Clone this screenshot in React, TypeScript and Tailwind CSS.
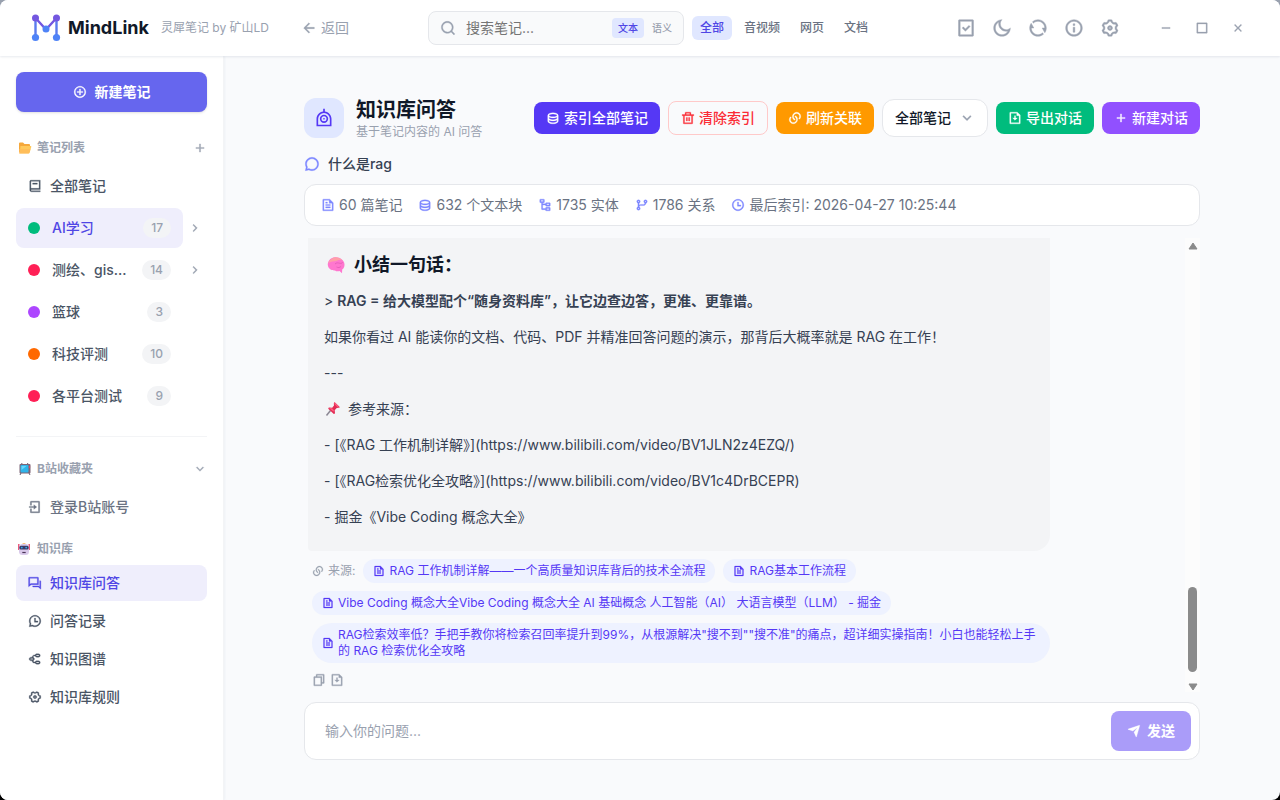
import { useState } from 'react';
import {
	RiAddCircleLine,
	RiAddLine,
	RiArrowDownSLine,
	RiArrowLeftLine,
	RiArrowRightSLine,
	RiBook2Line,
	RiChat3Line,
	RiChatHistoryLine,
	RiCheckboxBlankLine,
	RiCloseLine,
	RiDatabase2Line,
	RiDeleteBinLine,
	RiFileCopyLine,
	RiFileDownloadLine,
	RiFileTextLine,
	RiGitBranchLine,
	RiInformationLine,
	RiLinksLine,
	RiLoginBoxLine,
	RiMindMap,
	RiMoonLine,
	RiNodeTree,
	RiQuestionAnswerLine,
	RiRefreshLine,
	RiSearchLine,
	RiSendPlaneFill,
	RiSettings3Line,
	RiSettings4Line,
	RiSubtractLine,
	RiTaskLine,
	RiTimeLine,
} from 'react-icons/ri';

const folders = [
	{ name: 'AI学习', count: 17, color: 'bg-emerald-500', children: true },
	{ name: '测绘、gis...', count: 14, color: 'bg-rose-500', children: true },
	{ name: '篮球', count: 3, color: 'bg-purple-500', children: false },
	{ name: '科技评测', count: 10, color: 'bg-orange-500', children: false },
	{ name: '各平台测试', count: 9, color: 'bg-rose-500', children: false },
];

const knowledgeNav = [
	{ label: '知识库问答', icon: RiQuestionAnswerLine },
	{ label: '问答记录', icon: RiChatHistoryLine },
	{ label: '知识图谱', icon: RiMindMap },
	{ label: '知识库规则', icon: RiSettings4Line },
];

const stats = [
	{ text: '60 篇笔记', icon: RiFileTextLine },
	{ text: '632 个文本块', icon: RiDatabase2Line },
	{ text: '1735 实体', icon: RiNodeTree },
	{ text: '1786 关系', icon: RiGitBranchLine },
	{ text: '最后索引: 2026-04-27 10:25:44', icon: RiTimeLine },
];

const headerActions = [
	{ label: '任务', icon: RiTaskLine },
	{ label: '深色模式', icon: RiMoonLine },
	{ label: '刷新', icon: RiRefreshLine },
	{ label: '关于', icon: RiInformationLine },
	{ label: '设置', icon: RiSettings3Line },
];

const windowActions = [
	{ label: '最小化', icon: RiSubtractLine },
	{ label: '最大化', icon: RiCheckboxBlankLine },
	{ label: '关闭', icon: RiCloseLine },
];

const sources = [
	'RAG 工作机制详解——一个高质量知识库背后的技术全流程',
	'RAG基本工作流程',
	'Vibe Coding 概念大全Vibe Coding 概念大全 AI 基础概念 人工智能（AI） 大语言模型（LLM） - 掘金',
	'RAG检索效率低？手把手教你将检索召回率提升到99%，从根源解决"搜不到""搜不准"的痛点，超详细实操指南！小白也能轻松上手的 RAG 检索优化全攻略',
];

const Logo = () => (
	<svg viewBox="0 0 30 28" className="w-[30px] h-7 shrink-0">
		<g fill="none" strokeWidth="2.4">
			<path d="M4.5 4v20M25.5 4v20" stroke="#5b7bee" />
			<path d="M4.5 4 15 15.500 25.500 4" stroke="#7357e0" />
		</g>
		<circle cx="4.500" cy="4" r="3.500" fill="#7357e0" />
		<circle cx="25.500" cy="4" r="3.500" fill="#7357e0" />
		<circle cx="15" cy="15" r="3.500" fill="#4f83f7" />
		<circle cx="4.500" cy="23.500" r="3.600" fill="#4f83f7" />
		<circle cx="25.500" cy="23.500" r="3.600" fill="#4f83f7" />
	</svg>
);

const RobotIcon = () => (
	<svg viewBox="0 0 24 24" fill="currentColor" className="size-5">
		<path d="M13 4.055c4.500.497 8 4.312 8 8.945v9H3v-9c0-4.633 3.500-8.448 8-8.945V1h2v3.055zM19 20v-7a7 7 0 1 0-14 0v7h14zm-7-2a5 5 0 1 1 0-10 5 5 0 0 1 0 10zm0-2a3 3 0 1 0 0-6 3 3 0 0 0 0 6zm0-2a1 1 0 1 1 0-2 1 1 0 0 1 0 2z" />
	</svg>
);

const FolderEmoji = () => (
	<svg viewBox="0 0 16 16" className="size-4 shrink-0">
		<path d="M2 3.500q0-1 1-1h3l1.500 1.500H12q1 0 1 1V12H2z" fill="#f5a83c" />
		<path d="M3.500 6h10.200q.8 0 .6.8l-1.600 5.700q-.3 1-1.200 1H2.500z" fill="#ffc95c" />
		<path d="M2 9v4.500h9.500q.8 0 1-1l1-3.500z" fill="#ffb95a" opacity=".7" />
	</svg>
);

const TvEmoji = () => (
	<svg viewBox="0 0 16 16" className="size-4 shrink-0">
		<path d="M5.500 3.500 4.500 2M10 3.500 11 2M4 12l-1 2M12 12l1 2" stroke="#6b5d70" strokeWidth="1" />
		<rect x="2.500" y="3" width="11" height="9.500" rx="1" fill="#7d6577" />
		<rect x="3.500" y="4" width="8" height="7.500" rx="1" fill="#2fb4ea" />
		<path d="M4.500 5h5l-5 4z" fill="#67d6fb" />
		<path d="M12.500 5v2" stroke="#e0475f" strokeWidth="1.200" />
	</svg>
);

const RobotEmoji = () => (
	<svg viewBox="0 0 16 16" className="size-4 shrink-0">
		<path d="M1.800 3v6M12.200 3v6" stroke="#e8486f" strokeWidth="1.400" />
		<path d="M4.500 3.500Q7 1 9.500 3.500z" fill="#f6a13a" />
		<rect x="2" y="3" width="10" height="11" rx="3.500" fill="#d9c9ea" />
		<rect x="2.300" y="4.800" width="9.400" height="3.700" rx="1.500" fill="#3b3a66" />
		<circle cx="4.800" cy="6.600" r=".9" fill="#35a8f0" />
		<circle cx="9.200" cy="6.600" r=".9" fill="#35a8f0" />
		<path d="M5.300 11.500h3.400" stroke="#4b3558" strokeWidth="1.200" />
	</svg>
);

const BrainEmoji = () => (
	<svg viewBox="0 0 20 20" className="size-5 shrink-0">
		<path
			d="M2 11C1 7 4 2.500 9 2.200c5-.4 9.500 3 9.500 7.300 0 2.500-.8 4-2.300 5l-.2 3.700-2.500-2.200c-2 .6-3.500.2-4.500-.6C6 15.800 2.600 14 2 11z"
			fill="#ff77cf"
		/>
		<path d="M2 8.500C3.500 4.500 6.500 2.300 9.500 2.200c3 0 5.500 1.300 7 3.300-3-1-4.500 0-6.500.5-2.500.6-5 0-8 2.500z" fill="#ff9fa8" />
		<path
			d="M9 9c1.500-1.500 3-1.200 4.500-.8s2.500.3 3-.9M10.500 12c1.500 1 3.500.6 4.500-.6"
			fill="none"
			stroke="#e85fbc"
			strokeWidth="1"
		/>
	</svg>
);

const PinEmoji = () => (
	<svg viewBox="0 0 16 16" className="size-4 shrink-0">
		<path d="M6.500 9.500 2.500 14.500" stroke="#8b8794" strokeWidth="1.500" />
		<path
			d="M10.500 1 16 6.200l-1.500.6-1.800.3-2 2.200.3 3.200-1.200.6L4.200 7.800l.6-1.200 3.400.2L10 4.500l-.2-2z"
			fill="#e22b54"
		/>
		<path d="m10.800 1.500 4 4-1.500.5-3-3zM5 7l3 .2 2 2-.5 1.500z" fill="#ff5c7d" />
	</svg>
);

const Header = () => {
	const [filter, setFilter] = useState('全部');

	return (
		<header className="relative z-10 flex h-14 shrink-0 items-center bg-white pl-[31px] pr-6 shadow-[0_1px_2px_rgba(148,163,184,0.22)]">
			<Logo />
			<span className="ml-[7px] text-lg font-bold text-gray-900">MindLink</span>
			<span className="ml-3 text-xs text-gray-400">灵犀笔记 by 矿山LD</span>
			<button className="ml-8 flex items-center gap-1 text-sm text-gray-400">
				<RiArrowLeftLine className="size-4" />
				返回
			</button>
			<div className="ml-auto flex h-[34px] w-64 items-center rounded-lg border border-gray-200 bg-gray-50 pl-[11px] pr-[5px]">
				<RiSearchLine className="size-4 shrink-0 text-gray-400" />
				<input
					type="text"
					aria-label="搜索笔记"
					placeholder="搜索笔记..."
					className="ml-2.5 min-w-0 flex-1 bg-transparent text-sm outline-none placeholder:text-[#757575]"
				/>
				<button className="h-5 rounded bg-indigo-100 px-1.5 text-[10px] font-medium text-[#4f46e5]">
					文本
				</button>
				<button className="ml-0.5 h-5 rounded px-1.5 text-[10px] font-medium text-gray-400">
					语义
				</button>
			</div>
			<div className="ml-2 flex gap-1">
				{['全部', '音视频', '网页', '文档'].map((item) => (
					<button
						key={item}
						onClick={() => setFilter(item)}
						className={`h-6 rounded-md px-2 text-xs font-medium ${
							filter === item ? 'bg-indigo-100 text-[#4f46e5]' : 'text-gray-500'
						}`}
					>
						{item}
					</button>
				))}
			</div>
			<div className="ml-[72px] flex">
				{headerActions.map(({ label, icon: Icon }) => (
					<button
						key={label}
						aria-label={label}
						className="flex size-9 items-center justify-center text-gray-400"
					>
						<Icon className="size-5" />
					</button>
				))}
			</div>
			<div className="ml-5 flex">
				{windowActions.map(({ label, icon: Icon }) => (
					<button
						key={label}
						aria-label={label}
						className="flex size-9 items-center justify-center text-gray-400"
					>
						<Icon className="size-[14px]" />
					</button>
				))}
			</div>
		</header>
	);
};

const Sidebar = () => {
	const [active, setActive] = useState('知识库问答');

	return (
		<aside className="flex w-56 shrink-0 flex-col border-r border-gray-100 bg-white p-4 shadow-[1px_0_2px_rgba(148,163,184,0.1)]">
			<button className="flex h-10 items-center justify-center gap-2 rounded-lg bg-[#6666ee] text-sm font-semibold text-white shadow-sm">
				<RiAddCircleLine className="size-[14px]" />
				新建笔记
			</button>

			<div className="mt-6 flex h-6 items-center gap-1 pl-px text-xs font-bold text-gray-400">
				<FolderEmoji />
				<h2 className="flex-1">笔记列表</h2>
				<button aria-label="新建文件夹">
					<RiAddLine className="size-[14px]" />
				</button>
			</div>
			<button className="mt-2 flex h-9 items-center gap-2 px-3 text-sm font-medium text-gray-600">
				<RiBook2Line className="size-[14px]" />
				全部笔记
			</button>
			<ul className="mt-1 flex flex-col gap-0.5">
				{folders.map((folder, index) => (
					<li key={folder.name} className="flex items-center">
						<button
							className={`flex h-10 min-w-0 flex-1 items-center gap-3 rounded-lg px-3 text-sm font-medium ${
								index === 0 ? 'bg-[#efeefc] text-[#4f46e5]' : 'text-gray-600'
							}`}
						>
							<span className={`size-3 shrink-0 rounded-full ${folder.color}`} />
							<span className="flex-1 truncate text-left">{folder.name}</span>
							<span className="rounded-full bg-gray-100 px-2 text-xs leading-5 text-gray-400">
								{folder.count}
							</span>
						</button>
						<div className="flex w-6 justify-center text-gray-400">
							{folder.children ? (
								<button aria-label={`展开 ${folder.name}`}>
									<RiArrowRightSLine className="size-[14px]" />
								</button>
							) : null}
						</div>
					</li>
				))}
			</ul>

			<hr className="mt-5 border-gray-100" />

			<div className="mt-5 flex h-6 items-center gap-1 pl-px text-xs font-bold text-gray-400">
				<TvEmoji />
				<h2 className="flex-1">B站收藏夹</h2>
				<button aria-label="展开收藏夹">
					<RiArrowDownSLine className="size-[14px]" />
				</button>
			</div>
			<button className="mt-2 flex h-9 items-center gap-2 px-3 text-sm font-medium text-gray-500">
				<RiLoginBoxLine className="size-[14px]" />
				登录B站账号
			</button>

			<div className="mt-3 flex h-6 items-center gap-1 pl-px text-xs font-bold text-gray-400">
				<RobotEmoji />
				<h2>知识库</h2>
			</div>
			<nav className="mt-1 flex flex-col gap-0.5">
				{knowledgeNav.map(({ label, icon: Icon }) => (
					<button
						key={label}
						onClick={() => setActive(label)}
						className={`flex h-9 items-center gap-2 rounded-lg px-3 text-sm font-medium ${
							active === label ? 'bg-[#efeefc] text-[#4f46e5]' : 'text-gray-600'
						}`}
					>
						<Icon className="size-[14px]" />
						{label}
					</button>
				))}
			</nav>
		</aside>
	);
};

const Toolbar = () => (
	<div className="flex items-center gap-2">
		<button className="flex h-8 items-center gap-1 rounded-lg bg-[#5538f5] px-3 text-sm font-medium text-white">
			<RiDatabase2Line className="size-[14px]" />
			索引全部笔记
		</button>
		<button className="flex h-[34px] items-center gap-1 rounded-lg border border-red-200 px-3 text-sm font-medium text-red-500">
			<RiDeleteBinLine className="size-[14px]" />
			清除索引
		</button>
		<button className="flex h-8 items-center gap-1 rounded-lg bg-[#ff9900] px-3 text-sm font-medium text-white">
			<RiLinksLine className="size-[14px]" />
			刷新关联
		</button>
		<div className="relative">
			<select
				aria-label="笔记范围"
				className="h-[38px] w-[106px] appearance-none rounded-xl border border-gray-200 bg-white pl-3 text-sm font-medium text-gray-900"
			>
				<option>全部笔记</option>
			</select>
			<RiArrowDownSLine className="pointer-events-none absolute right-[13px] top-[11px] size-4 text-gray-400" />
		</div>
		<button className="flex h-8 items-center gap-1 rounded-lg bg-[#00bc7d] px-3 text-sm font-medium text-white">
			<RiFileDownloadLine className="size-[14px]" />
			导出对话
		</button>
		<button className="flex h-8 items-center gap-1 rounded-lg bg-[#9150ff] px-3 text-sm font-medium text-white">
			<RiAddLine className="size-[14px]" />
			新建对话
		</button>
	</div>
);

const Answer = () => (
	<div className="min-w-0 flex-1 pl-1">
		<div className="w-[742px] max-w-full">
			<div className="rounded-bl rounded-br-2xl bg-gray-100 px-4 pb-6 pt-[13px] text-sm text-gray-700">
				<h3 className="mb-3 flex items-center gap-2 pl-0.5 text-lg leading-7 font-bold text-gray-900">
					<BrainEmoji />
					小结一句话：
				</h3>
				<div className="flex flex-col gap-4">
					<p>
						&gt; <strong className="font-semibold">RAG = 给大模型配个“随身资料库”，让它边查边答，更准、更靠谱。</strong>
					</p>
					<p>如果你看过 AI 能读你的文档、代码、PDF 并精准回答问题的演示，那背后大概率就是 RAG 在工作！</p>
					<p>---</p>
					<p className="flex items-center gap-2">
						<PinEmoji />
						参考来源：
					</p>
					<p>- [《RAG 工作机制详解》](https://www.bilibili.com/video/BV1JLN2z4EZQ/)</p>
					<p>- [《RAG检索优化全攻略》](https://www.bilibili.com/video/BV1c4DrBCEPR)</p>
					<p>- 掘金《Vibe Coding 概念大全》</p>
				</div>
			</div>
			<div className="mt-2 flex flex-wrap items-center gap-2 pl-1 text-xs">
				<span className="flex items-center gap-1 text-gray-400">
					<RiLinksLine className="size-3" />
					来源:
				</span>
				{sources.map((source) => (
					<button
						key={source}
						className="flex items-center gap-1 rounded-[20px] bg-indigo-50 px-2.5 py-1 text-left text-[#5538f5]"
					>
						<RiFileTextLine className="size-3 shrink-0" />
						<span>{source}</span>
					</button>
				))}
			</div>
			<div className="mt-2 flex h-[18px] items-center gap-1 pl-1 text-gray-400">
				<button aria-label="复制">
					<RiFileCopyLine className="size-[14px]" />
				</button>
				<button aria-label="下载">
					<RiFileDownloadLine className="size-[14px]" />
				</button>
			</div>
		</div>
	</div>
);

const Scrollbar = () => (
	<div className="flex w-[15px] shrink-0 flex-col items-center bg-[#fcfcfc] pb-px pt-1">
		<svg viewBox="0 0 10 8" className="h-2 w-[10px]">
			<path d="M5 1 9 7H1z" fill="#8b8b8b" stroke="#8b8b8b" strokeWidth="1" strokeLinejoin="round" />
		</svg>
		<div className="flex-1" />
		<div className="mb-[11px] h-[85px] w-[9px] rounded-full bg-[#8b8b8b]" />
		<svg viewBox="0 0 10 8" className="h-2 w-[10px]">
			<path d="M5 7 9 1H1z" fill="#8b8b8b" stroke="#8b8b8b" strokeWidth="1" strokeLinejoin="round" />
		</svg>
	</div>
);

const App = () => {
	const [question, setQuestion] = useState('');

	return (
		<div className="bg-gradient-to-b from-gray-400 to-black">
			<div className="flex h-screen flex-col overflow-hidden rounded-lg bg-[#f9fafc] font-['Inter','Noto_Sans_CJK_SC',sans-serif] [&_svg]:stroke-[0.5]">
				<Header />
				<div className="flex min-h-0 flex-1">
					<Sidebar />
					<main className="flex min-w-0 flex-1 flex-col py-10">
						<div className="mx-auto flex min-h-0 w-full max-w-4xl flex-1 flex-col">
							<div className="flex items-center justify-between">
								<div className="flex items-center gap-3">
									<div className="flex size-10 items-center justify-center rounded-xl bg-indigo-100 text-[#5538f5]">
										<RobotIcon />
									</div>
									<div>
										<h1 className="text-xl leading-7 font-bold text-gray-900">知识库问答</h1>
										<p className="text-xs text-gray-400">基于笔记内容的 AI 问答</p>
									</div>
								</div>
								<Toolbar />
							</div>

							<div className="mt-3 flex items-center gap-2 text-sm leading-6 font-medium text-gray-700">
								<RiChat3Line className="size-4 text-indigo-400" />
								什么是rag
							</div>

							<div className="mt-2 flex items-center gap-4 rounded-xl border border-gray-200 bg-white px-4 py-2.5 text-sm text-gray-500">
								{stats.map(({ text, icon: Icon }) => (
									<span key={text} className="flex items-center gap-1">
										<Icon className="size-[14px] text-indigo-400" />
										{text}
									</span>
								))}
							</div>

							<div className="mt-3 flex min-h-0 flex-1 overflow-hidden">
								<Answer />
								<Scrollbar />
							</div>

							<form
								onSubmit={(e) => e.preventDefault()}
								className="mt-2.5 flex items-center rounded-xl border border-gray-200 bg-white p-2"
							>
								<textarea
									rows={1}
									aria-label="问题"
									value={question}
									onChange={(e) => setQuestion(e.target.value)}
									placeholder="输入你的问题..."
									className="h-10 min-w-0 flex-1 resize-none px-3 py-2.5 text-sm outline-none placeholder:text-gray-400"
								/>
								<button className="flex h-10 items-center gap-1.5 rounded-lg bg-[#aa9cf9] px-4 text-sm font-semibold text-white">
									<RiSendPlaneFill className="size-[14px]" />
									发送
								</button>
							</form>
						</div>
					</main>
				</div>
			</div>
		</div>
	);
};

export default App;
